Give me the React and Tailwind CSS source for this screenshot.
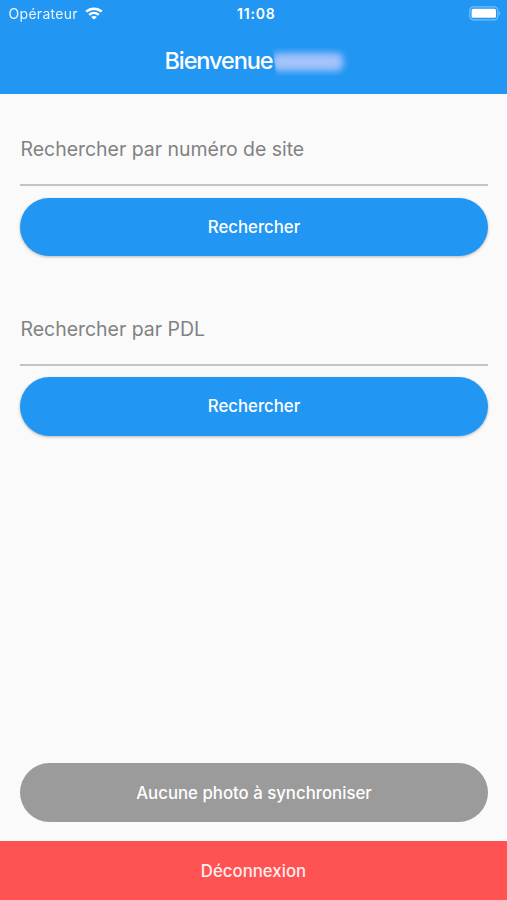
function StatusBar() {
  return (
    <div className="h-[27px] grid grid-cols-3 items-center pl-[8.5px] pr-[6px] text-white">
      <div className="flex items-center gap-[7px]">
        <span className="text-[14px] leading-none tracking-[0.3px] opacity-90">Opérateur</span>
        <svg width="18" height="13" viewBox="0 0 18 13" fill="none" stroke="currentColor" strokeWidth="2.5">
          <path d="M1.2 4.7C5.7 0.6 12.3 0.6 16.8 4.7" />
          <path d="M4.2 7.9C7 5.4 11 5.4 13.8 7.9" />
          <path d="M9 12.6L6.1 10C7.8 8.5 10.2 8.5 11.9 10Z" fill="currentColor" stroke="none" />
        </svg>
      </div>
      <span className="pl-[3px] text-[14px] leading-none font-semibold tracking-[0.8px] text-center">11:08</span>
      <svg className="justify-self-end" width="32" height="15" viewBox="0 0 32 15">
        <rect x="0.8" y="0.8" width="28" height="13" rx="3.6" fill="none" stroke="white" strokeOpacity="0.4" strokeWidth="1.2" />
        <rect x="2.6" y="2.8" width="24.4" height="9" rx="1.6" fill="white" />
        <path d="M30 5.2C31.6 5.8 31.6 8.8 30 9.4Z" fill="white" fillOpacity="0.4" />
      </svg>
    </div>
  )
}

function Header() {
  return (
    <header className="h-[94px] bg-[#2196f3] shrink-0">
      <StatusBar />
      <div className="h-[67px] flex items-center justify-center pl-[8px]">
        <h1 className="text-[23.5px] leading-none font-medium tracking-[-1.1px] text-white">Bienvenue</h1>
        {/* masked user name */}
        <div className="w-[78px] h-[28px] mt-[3px] pt-[5px] [clip-path:polygon(0_0,100%_0,100%_100%,5%_100%)]">
          <div className="w-[71px] h-[18px] rounded-md bg-[#a4c3fa] blur-[3.5px]" />
        </div>
      </div>
    </header>
  )
}

function SearchBlock({ label }) {
  return (
    <section className="flex flex-col">
      <div className="h-[56px] flex items-center border-b-2 border-[#c4c4c4]">
        <input
          aria-label={label}
          placeholder={label}
          className="w-full h-full pl-[0.5px] pb-[16px] bg-transparent outline-none text-[19.5px] tracking-[-0.03px] placeholder:text-[#828282]"
        />
      </div>
      <button className="mt-[11.5px] h-[58.5px] pt-px rounded-full bg-[#2196f3] text-white text-[16.8px] font-medium shadow-[0_1px_3px_rgba(0,0,0,0.28)]">
        Rechercher
      </button>
    </section>
  )
}

export default function App() {
  return (
    <div className="w-full h-[900px] flex flex-col bg-[#fafafa] font-['Inter',sans-serif] overflow-hidden">
      <Header />

      <main className="flex-1 flex flex-col pl-[20px] pr-[19px] pt-[36px] pb-[19.5px]">
        <div className="flex flex-col gap-[53.5px]">
          <SearchBlock label="Rechercher par numéro de site" />
          <SearchBlock label="Rechercher par PDL" />
        </div>
        <button className="mt-auto h-[58.5px] pt-[2.5px] rounded-full bg-[#9b9b9b] text-white text-[16.8px] font-medium">
          Aucune photo à synchroniser
        </button>
      </main>

      <button className="h-[59px] pt-[2.5px] shrink-0 bg-[#ff5252] text-[#ffeeee] text-[16.8px] font-medium">
        Déconnexion
      </button>
    </div>
  )
}
